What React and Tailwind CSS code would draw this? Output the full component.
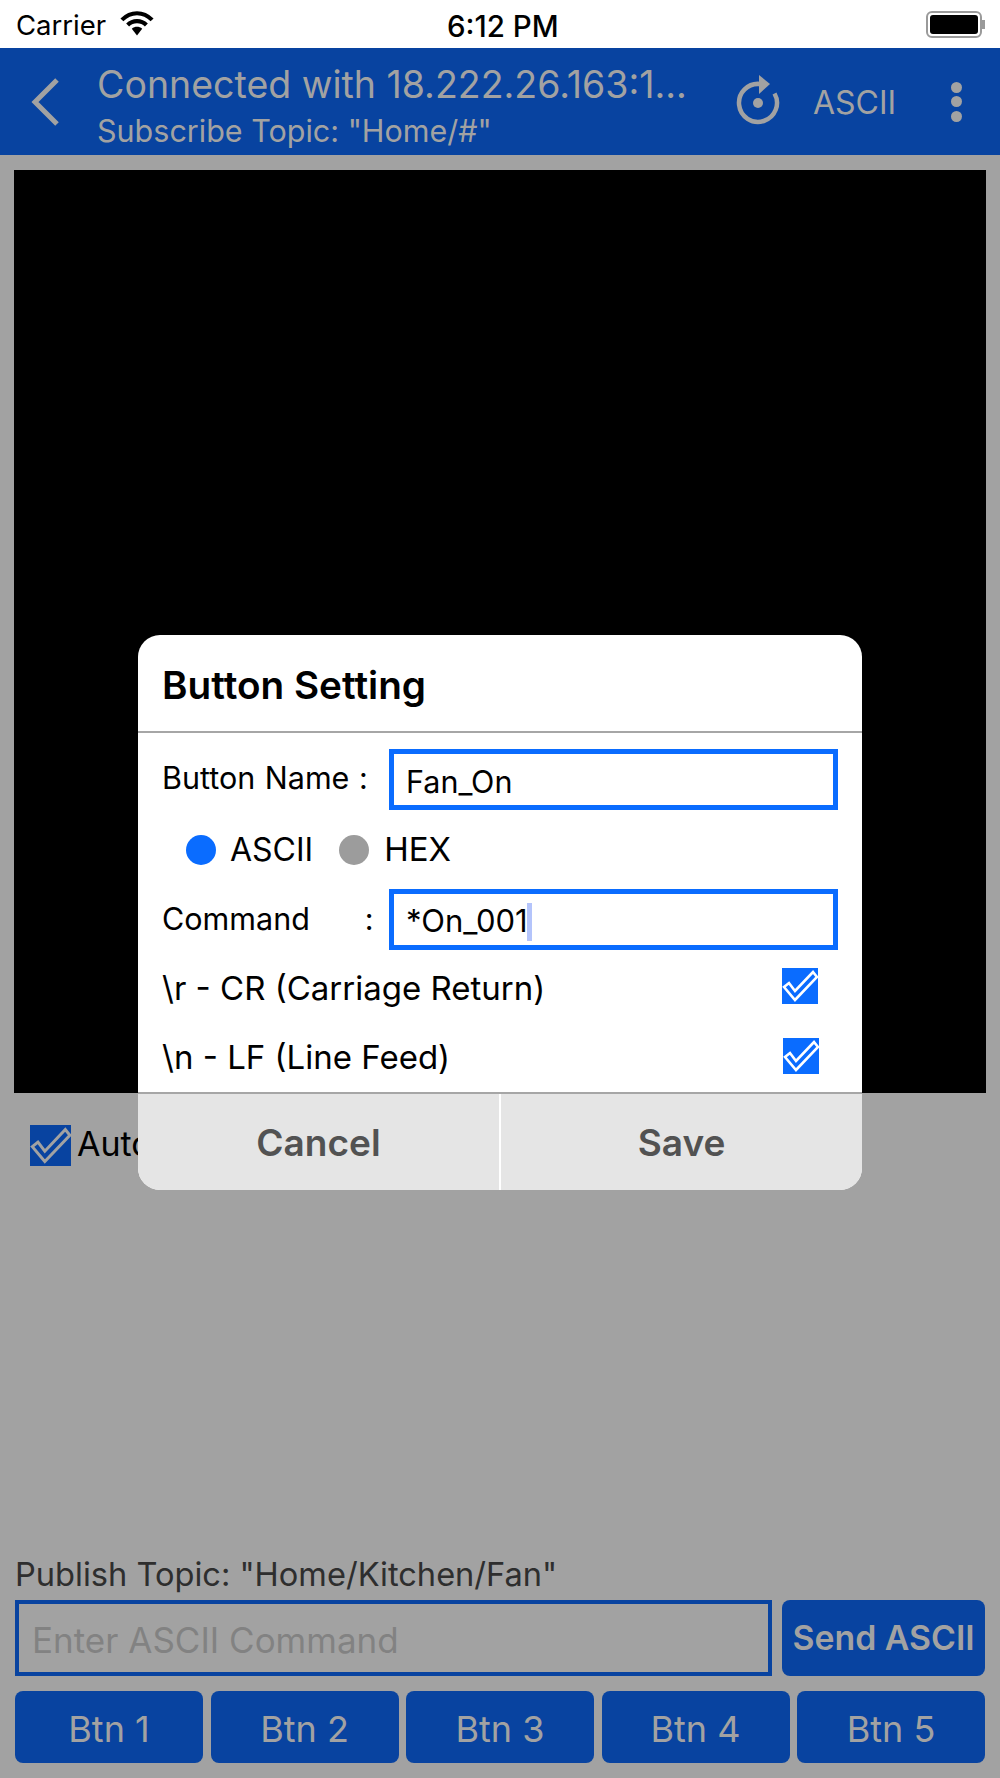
import React from "react";

const Check = ({ bg, cls, color = "#fff" }) => (
  <div className={`flex items-center justify-center shrink-0 ${bg} ${cls}`}>
    <svg viewBox="0 0 36 36" className="w-full h-full" fill="none">
      <path d="M2 19 L13 32 L35 9 L31 4 L13 23 L7 15 Z" stroke={color} strokeWidth="2.6" />
    </svg>
  </div>
);

const btns = ["Btn 1", "Btn 2", "Btn 3", "Btn 4", "Btn 5"];

export default function App() {
  return (
    <div className="relative w-[1000px] h-[1778px] flex flex-col bg-[#a2a2a2] overflow-hidden font-['Inter',sans-serif]">
      {/* status bar */}
      <div className="h-[48px] shrink-0 bg-white flex items-center justify-between pl-[16px] pr-[15px] relative">
        <div className="flex items-center gap-[14px] pt-[2px]">
          <span className="text-[27.5px] leading-[32px] text-black">Carrier</span>
          <svg viewBox="0 0 32 24" className="w-[34px] h-[25px] -mt-[3px]" fill="none">
            <path d="M1.5 8.5 C10 0 22 0 30.5 8.5" stroke="#000" strokeWidth="4" />
            <path d="M7 13.5 C12 8.5 20 8.5 25 13.5" stroke="#000" strokeWidth="4" />
            <path d="M11 17 L16 23.5 L21 17 C18 14.5 14 14.5 11 17 Z" fill="#000" />
          </svg>
        </div>
        <span className="absolute left-[447px] top-[9px] text-[29.5px] leading-[34px] font-medium text-black">6:12 PM</span>
        <div className="flex items-center">
          <div className="w-[56px] h-[27px] rounded-[6px] border-2 border-[#9a9a9a] p-[2px]">
            <div className="w-full h-full rounded-[3px] bg-black" />
          </div>
          <div className="w-[3px] h-[9px] bg-[#9a9a9a]" />
        </div>
      </div>

      {/* nav */}
      <div className="h-[107px] shrink-0 bg-[#0843a0] flex items-center text-[#a2a2a2]">
        <div className="w-[97px] shrink-0 pl-[28px] flex items-center">
          <svg viewBox="0 0 32 48" className="w-[32px] h-[48px]" fill="none">
            <path d="M29 2 L7 24 L29 46" stroke="#a2a2a2" strokeWidth="5" />
          </svg>
        </div>
        <div className="w-[638px] shrink-0 flex flex-col pt-[9px]">
          <div className="text-[37.5px] leading-[42px] whitespace-nowrap">Connected with 18.222.26.163:1...</div>
          <div className="text-[30.5px] leading-[36px] mt-[7px] whitespace-nowrap">Subscribe Topic: "Home/#"</div>
        </div>
        <svg viewBox="0 0 48 56" className="w-[48px] h-[56px] shrink-0 -mt-[1px]" fill="none">
          <path d="M25 11 A19 19 0 1 0 39.5 20.5" stroke="#a2a2a2" strokeWidth="4.5" />
          <path d="M24 2 L35 11 L24 21 Z" fill="#a2a2a2" />
          <circle cx="23" cy="30" r="5" fill="#a2a2a2" />
        </svg>
        <span className="ml-[30px] pt-[2px] text-[32px] leading-[36px]">ASCII</span>
        <div className="ml-[55px] flex flex-col gap-[3.5px]">
          <div className="w-[11px] h-[11px] rounded-full bg-[#a2a2a2]" />
          <div className="w-[11px] h-[11px] rounded-full bg-[#a2a2a2]" />
          <div className="w-[11px] h-[11px] rounded-full bg-[#a2a2a2]" />
        </div>
      </div>

      {/* console */}
      <div className="mt-[15px] mx-[14px] h-[923px] shrink-0 bg-black" />

      {/* auto scroll */}
      <div className="mt-[32px] ml-[30px] flex items-center gap-[6px]">
        <Check bg="bg-[#0843a0]" cls="w-[41px] h-[41px]" color="#a2a2a2" />
        <span className="text-[34px] leading-[40px] text-black -mt-[3px]">Auto</span>
      </div>

      {/* bottom */}
      <div className="mt-auto px-[15px] pb-[15px] flex flex-col">
        <div className="text-[32.6px] leading-[38px] text-[#2e2e2e]">Publish Topic: "Home/Kitchen/Fan"</div>
        <div className="mt-[7px] flex gap-[10px] h-[76px]">
          <div className="w-[758px] border-4 border-[#0843a0] flex items-center pl-[13px] pt-[4px] text-[35px] text-[#828282]">
            Enter ASCII Command
          </div>
          <div className="w-[203px] rounded-[8px] bg-[#0843a0] flex items-center justify-center text-[33.8px] font-semibold text-[#a2a2a2] whitespace-nowrap">
            Send ASCII
          </div>
        </div>
        <div className="mt-[15px] grid grid-cols-5 gap-[7.5px] h-[72px]">
          {btns.map((b) => (
            <div key={b} className="rounded-[8px] bg-[#0843a0] flex items-center justify-center pt-[3px] text-[36px] text-[#a2a2a2]">
              {b}
            </div>
          ))}
        </div>
      </div>

      {/* dialog */}
      <div className="absolute left-[138px] top-[635px] w-[724px] h-[555px] rounded-[22px] overflow-hidden bg-white flex flex-col">
        <div className="h-[98px] shrink-0 flex items-center pl-[24px] text-[38.7px] font-semibold text-black border-b-2 border-[#a6a6a6] pt-[5px]">
          Button Setting
        </div>
        <div className="flex-1 flex flex-col pl-[24px] pr-[24px] text-black">
          <div className="mt-[16px] h-[61px] flex items-center">
            <span className="text-[30.5px] leading-[36px] whitespace-nowrap -mt-[3px] [word-spacing:1px]">Button Name :</span>
            <div className="ml-auto w-[449px] shrink-0 h-[61px] border-[5px] border-[#0a6cff] flex items-center pl-[12px] text-[30.5px] pt-[4px]">Fan_On</div>
          </div>
          <div className="h-[79px] flex items-center pl-[24px]">
            <div className="w-[30px] h-[30px] rounded-full bg-[#0a6cff]" />
            <span className="ml-[14px] text-[32px]">ASCII</span>
            <div className="ml-[26px] w-[30px] h-[30px] rounded-full bg-[#9c9c9c]" />
            <span className="ml-[15px] text-[33px]">HEX</span>
          </div>
          <div className="h-[61px] flex items-center">
            <span className="text-[30.5px] leading-[36px] whitespace-nowrap -mt-[2px]">Command</span>
            <span className="ml-[55px] text-[30.5px] leading-[36px] -mt-[2px]">:</span>
            <div className="ml-auto w-[449px] shrink-0 h-[61px] border-[5px] border-[#0a6cff] flex items-center pl-[12px] text-[31px] pt-[4px]">
              *On_001
              <span className="w-[5px] h-[38px] bg-[#b4c4fb] -ml-[1px]" />
            </div>
          </div>
          <div className="mt-[18px] h-[36px] flex items-center justify-between pr-[20px]">
            <span className="text-[33px] leading-[36px] whitespace-nowrap pt-[3px]">\r - CR (Carriage Return)</span>
            <Check bg="bg-[#0a6cff]" cls="w-[36px] h-[36px]" />
          </div>
          <div className="mt-[34px] h-[36px] flex items-center justify-between pr-[19px]">
            <span className="text-[33px] leading-[36px] whitespace-nowrap pt-[2px]">\n - LF (Line Feed)</span>
            <Check bg="bg-[#0a6cff]" cls="w-[36px] h-[36px]" />
          </div>
        </div>
        <div className="h-[98px] shrink-0 bg-[#e5e5e5] border-t-2 border-[#a6a6a6] flex text-[37px] font-semibold text-[#525252]">
          <div className="w-[363px] flex items-center justify-center border-r-2 border-white pt-[2px]">Cancel</div>
          <div className="flex-1 flex items-center justify-center pt-[2px]">Save</div>
        </div>
      </div>
    </div>
  );
}
